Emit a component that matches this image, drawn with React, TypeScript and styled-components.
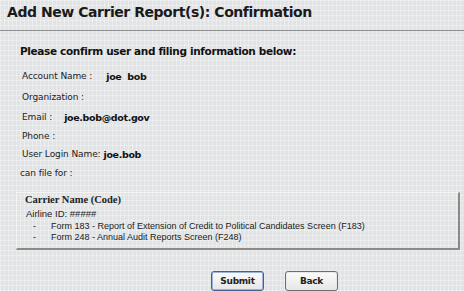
import React from "react";
import styled, { createGlobalStyle } from "styled-components";

const GlobalStyle = createGlobalStyle`
  html, body {
    margin: 0;
    padding: 0;
    width: 464px;
    height: 291px;
    overflow: hidden;
  }
  body {
    font-family: "DejaVu Sans", Verdana, sans-serif;
    color: #111;
    background-color: #e1e3e4;
    background-image:
      repeating-linear-gradient(90deg, rgba(255,255,255,0.35) 0 1px, transparent 1px 4px),
      repeating-linear-gradient(0deg, rgba(255,255,255,0.3) 0 1px, transparent 1px 5px);
  }
`;

const Page = styled.div`
  width: 464px;
  height: 291px;
  display: flex;
  flex-direction: column;
`;

const TitleBar = styled.h1`
  margin: 0;
  padding: 4px 0 0 7px;
  height: 31px;
  box-sizing: border-box;
  border-bottom: 1px solid #8e9092;
  font-size: 14px;
  font-weight: bold;
  letter-spacing: -0.45px;
  color: #1a1a1a;
`;

const Body = styled.div`
  padding: 10px 5px 0 16px;
  display: flex;
  flex-direction: column;
`;

const Lead = styled.div`
  display: flex;
  align-items: center;
  font-size: 10.5px;
  font-weight: bold;
  letter-spacing: -0.35px;
  margin: 0 0 5px 4px;
  height: 20px;
`;

const Row = styled.div<{ $h: number; $indent?: number }>`
  display: flex;
  align-items: center;
  height: ${(p) => p.$h}px;
  margin-left: ${(p) => p.$indent ?? 6}px;
  font-size: 9px;
  letter-spacing: -0.1px;
  color: #222;
`;

const Value = styled.span<{ $gap: number }>`
  margin-left: ${(p) => p.$gap}px;
  font-size: 9.5px;
  font-weight: bold;
  letter-spacing: -0.35px;
  color: #111;
`;

const CarrierBox = styled.div`
  margin-top: 9px;
  width: 444px;
  height: 58px;
  box-sizing: border-box;
  border-top: 1px solid #f4f4f0;
  border-left: 1px solid #f4f4f0;
  border-right: 2px solid #8a8a88;
  border-bottom: 2px solid #8a8a88;
  padding: 0 0 0 8px;
  font-family: "Liberation Sans", Arial, sans-serif;
  font-size: 9px;
  color: #222;
`;

const CarrierName = styled.div`
  font-family: "Liberation Serif", "Times New Roman", serif;
  font-weight: bold;
  font-size: 10.5px;
  height: 13px;
  display: flex;
  align-items: center;
`;

const AirlineId = styled.div`
  margin-left: 1px;
  font-size: 9.5px;
  height: 14px;
  display: flex;
  align-items: center;
`;

const FormItem = styled.div`
  display: flex;
  align-items: center;
  height: 11px;
  margin-left: 8px;
`;

const Dash = styled.span`
  width: 18px;
`;

const Buttons = styled.div`
  display: flex;
  gap: 21px;
  margin-top: 21px;
  padding-left: 195px;
`;

const Button = styled.button<{ $primary?: boolean }>`
  width: 53px;
  height: 20px;
  box-sizing: border-box;
  font-family: "DejaVu Sans", Verdana, sans-serif;
  font-size: 9px;
  font-weight: bold;
  letter-spacing: -0.3px;
  color: #222;
  border-radius: 3px;
  border: 1px solid ${(p) => (p.$primary ? "#4a5f8c" : "#6e6e6e")};
  box-shadow: ${(p) =>
    p.$primary ? "inset 0 0 0 1px #9fb2d8" : "inset 0 0 0 1px #e8e8e8"};
  background: linear-gradient(#fbfbfb, #e6e6e6);
  padding: 0;
`;

export default function App() {
  return (
    <Page>
      <GlobalStyle />
      <TitleBar>Add New Carrier Report(s): Confirmation</TitleBar>
      <Body>
        <Lead>Please confirm user and filing information below:</Lead>
        <Row $h={20}>
          Account Name :<Value $gap={14}>joe&nbsp;&nbsp;bob</Value>
        </Row>
        <Row $h={21}>Organization :</Row>
        <Row $h={20}>
          Email :<Value $gap={12}>joe.bob@dot.gov</Value>
        </Row>
        <Row $h={18}>Phone :</Row>
        <Row $h={18}>
          User Login Name:<Value $gap={3}>joe.bob</Value>
        </Row>
        <Row $h={20} $indent={4}>
          can file for :
        </Row>
        <CarrierBox>
          <CarrierName>Carrier Name (Code)</CarrierName>
          <AirlineId>Airline ID: #####</AirlineId>
          <FormItem>
            <Dash>-</Dash>
            Form 183 - Report of Extension of Credit to Political Candidates Screen (F183)
          </FormItem>
          <FormItem>
            <Dash>-</Dash>
            Form 248 - Annual Audit Reports Screen (F248)
          </FormItem>
        </CarrierBox>
        <Buttons>
          <Button $primary>Submit</Button>
          <Button>Back</Button>
        </Buttons>
      </Body>
    </Page>
  );
}
